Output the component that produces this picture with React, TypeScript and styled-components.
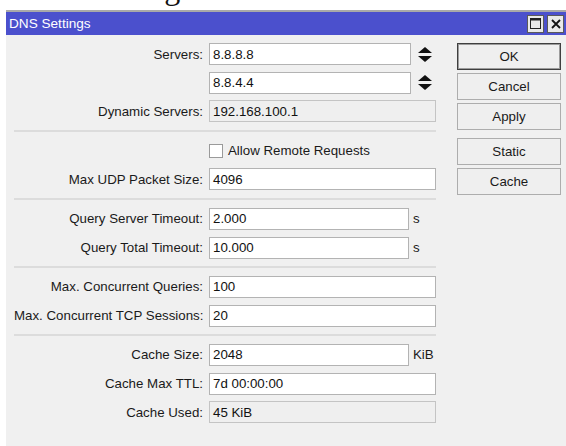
import React from "react";
import styled, { createGlobalStyle } from "styled-components";

const Global = createGlobalStyle`
  html, body {
    margin: 0;
    padding: 0;
    background: #ffffff;
  }
  body {
    font-family: "Liberation Sans", Arial, sans-serif;
    font-size: 13.3px;
    color: #1a1a1a;
    overflow: hidden;
  }
`;

const Page = styled.div`
  width: 566px;
  height: 446px;
  display: flex;
  flex-direction: column;
  overflow: hidden;
`;

/* Caption of the document above the dialog, scrolled almost out of view */
const CaptionStrip = styled.div`
  height: 10px;
  overflow: hidden;
`;

const CaptionText = styled.div`
  font-family: "Liberation Serif", "Times New Roman", serif;
  font-size: 32px;
  line-height: 36px;
  color: #111;
  white-space: nowrap;
  margin-top: -30px;
  margin-left: 14px;
`;

const Window = styled.div`
  flex: 1;
  margin-left: 6px;
  border-top: 2px solid #a9a9a9;
  display: flex;
  flex-direction: column;
  background: #f0f0f0;
`;

const TitleBar = styled.div`
  height: 23px;
  background: #4b50cd;
  display: flex;
  align-items: center;
  justify-content: space-between;
  padding: 0 2px 0 3px;
`;

const Title = styled.span`
  color: #ffffff;
  font-size: 13.6px;
`;

const TitleButtons = styled.div`
  display: flex;
  gap: 3px;
`;

const TitleButton = styled.button`
  width: 17px;
  height: 18px;
  padding: 0;
  margin: 0;
  border: 1px solid #5a5a5a;
  background: #e9e9e9;
  display: flex;
  align-items: center;
  justify-content: center;
`;

const Body = styled.div`
  display: flex;
  align-items: flex-start;
  gap: 21px;
  padding: 8px 0 0 8px;
`;

const Form = styled.div`
  width: 422px;
  display: flex;
  flex-direction: column;
  gap: 6.7px;
`;

const Row = styled.div`
  display: grid;
  grid-template-columns: 189px auto;
  column-gap: 6px;
  align-items: center;
  height: 22px;
`;

const Label = styled.span`
  text-align: right;
  white-space: nowrap;
`;

const Field = styled.div`
  display: flex;
  align-items: center;
  gap: 4px;
`;

const Input = styled.div<{ $w: number; $readOnly?: boolean }>`
  box-sizing: border-box;
  width: ${(p) => p.$w}px;
  height: 22px;
  padding: 0 3px;
  display: flex;
  align-items: center;
  background: ${(p) => (p.$readOnly ? "#efefef" : "#ffffff")};
  border: 1px solid ${(p) => (p.$readOnly ? "#c4c4c4" : "#b3b3b3")};
  color: #111;
  white-space: nowrap;
`;

const Unit = styled.span`
  color: #1a1a1a;
`;

const Spinner = styled.svg`
  margin-left: 3px;
  display: block;
`;

const Check = styled.span`
  box-sizing: border-box;
  width: 14px;
  height: 14px;
  background: #ffffff;
  border: 1px solid #9a9a9a;
`;

const CheckLine = styled.label`
  display: flex;
  align-items: center;
  gap: 5px;
`;

const Divider = styled.div`
  height: 2px;
  margin: 1px 0;
  background: #dcdcdc;
`;

const Buttons = styled.div`
  display: flex;
  flex-direction: column;
  gap: 3px;
`;

const Button = styled.button<{ $primary?: boolean }>`
  box-sizing: border-box;
  width: 104px;
  height: 27px;
  margin: 0;
  padding: 0;
  font-family: "Liberation Sans", Arial, sans-serif;
  font-size: 13.3px;
  color: #1a1a1a;
  background: #efefef;
  border: 1px solid ${(p) => (p.$primary ? "#3f3f3f" : "#adadad")};
  box-shadow: ${(p) => (p.$primary ? "inset 0 0 0 1px #9c9c9c" : "none")};
`;

const ButtonGap = styled.div`
  height: 2px;
`;

const SpinArrows = () => (
  <Spinner width="14" height="15" viewBox="0 0 14 15">
    <polygon points="7,0 14,6 0,6" fill="#111" />
    <polygon points="0,9 14,9 7,15" fill="#111" />
  </Spinner>
);

const MaximizeIcon = () => (
  <svg width="11" height="11" viewBox="0 0 11 11">
    <rect x="0.5" y="0.5" width="10" height="10" fill="none" stroke="#222" />
    <rect x="0.5" y="0.5" width="10" height="2" fill="#222" />
  </svg>
);

const CloseIcon = () => (
  <svg width="10" height="10" viewBox="0 0 10 10">
    <path d="M1 1 L9 9 M9 1 L1 9" stroke="#111" strokeWidth="1.8" />
  </svg>
);

type FieldRow = {
  label: string;
  value: string;
  width?: number;
  unit?: string;
  readOnly?: boolean;
};

const FieldLine = ({ label, value, width = 227, unit, readOnly }: FieldRow) => (
  <Row>
    <Label>{label}</Label>
    <Field>
      <Input $w={width} $readOnly={readOnly}>
        {value}
      </Input>
      {unit && <Unit>{unit}</Unit>}
    </Field>
  </Row>
);

const ServerLine = ({ label, value }: { label: string; value: string }) => (
  <Row>
    <Label>{label}</Label>
    <Field>
      <Input $w={202}>{value}</Input>
      <SpinArrows />
    </Field>
  </Row>
);

export default function App() {
  return (
    <Page>
      <Global />
      <CaptionStrip>
        <CaptionText>Static settings for DNS</CaptionText>
      </CaptionStrip>
      <Window>
        <TitleBar>
          <Title>DNS Settings</Title>
          <TitleButtons>
            <TitleButton aria-label="Maximize">
              <MaximizeIcon />
            </TitleButton>
            <TitleButton aria-label="Close">
              <CloseIcon />
            </TitleButton>
          </TitleButtons>
        </TitleBar>
        <Body>
          <Form>
            <ServerLine label="Servers:" value="8.8.8.8" />
            <ServerLine label="" value="8.8.4.4" />
            <FieldLine label="Dynamic Servers:" value="192.168.100.1" readOnly />
            <Divider />
            <Row>
              <span />
              <CheckLine>
                <Check />
                Allow Remote Requests
              </CheckLine>
            </Row>
            <FieldLine label="Max UDP Packet Size:" value="4096" />
            <Divider />
            <FieldLine label="Query Server Timeout:" value="2.000" width={200} unit="s" />
            <FieldLine label="Query Total Timeout:" value="10.000" width={200} unit="s" />
            <Divider />
            <FieldLine label="Max. Concurrent Queries:" value="100" />
            <FieldLine label="Max. Concurrent TCP Sessions:" value="20" />
            <Divider />
            <FieldLine label="Cache Size:" value="2048" width={200} unit="KiB" />
            <FieldLine label="Cache Max TTL:" value="7d 00:00:00" />
            <FieldLine label="Cache Used:" value="45 KiB" readOnly />
          </Form>
          <Buttons>
            <Button $primary>OK</Button>
            <Button>Cancel</Button>
            <Button>Apply</Button>
            <ButtonGap />
            <Button>Static</Button>
            <Button>Cache</Button>
          </Buttons>
        </Body>
      </Window>
    </Page>
  );
}
